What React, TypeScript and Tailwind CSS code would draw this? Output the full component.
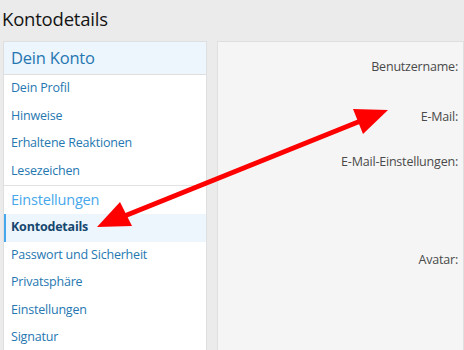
const FONT = "font-['Open_Sans','Noto_Sans',sans-serif]"

const accountLinks = ["Dein Profil", "Hinweise", "Erhaltene Reaktionen", "Lesezeichen"]
const settingsLinks = [
  { label: "Kontodetails", active: true },
  { label: "Passwort und Sicherheit" },
  { label: "Privatsphäre" },
  { label: "Einstellungen" },
  { label: "Signatur" },
]

function NavItem({ label, active }: { label: string; active?: boolean }) {
  return (
    <div
      className={
        active
          ? "flex h-[27.5px] items-center border-l-2 border-[#47a7eb] bg-[#edf5fd] pl-[5px] text-[12.5px] font-bold tracking-[-0.2px] text-[#15476f]"
          : "flex h-[27.5px] items-center pl-[7px] text-[12.5px] tracking-[-0.2px] text-[#2577b1]"
      }
    >
      {label}
    </div>
  )
}

function Arrow() {
  return (
    <svg className="pointer-events-none absolute inset-0" width="464" height="350" viewBox="0 0 464 350">
      <line x1="122" y1="217" x2="363" y2="120" stroke="#ff0000" strokeWidth="5" />
      <polygon points="97,227 120,202 132,226" fill="#ff0000" />
      <polygon points="388,110 353,109 363,134" fill="#ff0000" />
    </svg>
  )
}

export default function App() {
  return (
    <div className={`relative h-[350px] w-[464px] overflow-hidden bg-[#ebebeb] ${FONT}`}>
      <h1 className="pl-[2px] pt-[5px] text-[18.5px] leading-[28px] tracking-[-0.2px] text-[#141414]">
        Kontodetails
      </h1>

      <div className="mt-[8px] flex gap-[10px] pl-[3px]">
        {/* Sidebar */}
        <div className="w-[204px] shrink-0 border border-[#dfdfdf] bg-white">
          <div className="flex h-[33px] items-center border-b border-[#dfdfdf] bg-[#edf5fd] pl-[7px] pt-[1px] text-[16.5px] tracking-[-0.2px] text-[#2577b1]">
            Dein Konto
          </div>
          {accountLinks.map((l) => (
            <NavItem key={l} label={l} />
          ))}
          <div className="border-t border-[#e2e2e2]" />
          <div className="flex h-[28px] items-center pl-[7px] text-[14.5px] tracking-[-0.2px] text-[#47a7eb]">
            Einstellungen
          </div>
          {settingsLinks.map((l) => (
            <NavItem key={l.label} label={l.label} active={l.active} />
          ))}
        </div>

        {/* Main form */}
        <div className="flex-1 border border-[#dfdfdf] bg-[#f5f5f5] pr-[5px] text-right text-[12.5px] tracking-[-0.2px] text-[#4a4a4a]">
          <div className="mt-[16px]">Benutzername:</div>
          <div className="mt-[31px]">E-Mail:</div>
          <div className="mt-[26px]">E-Mail-Einstellungen:</div>
          <div className="mt-[80px]">Avatar:</div>
        </div>
      </div>

      <Arrow />
    </div>
  )
}
